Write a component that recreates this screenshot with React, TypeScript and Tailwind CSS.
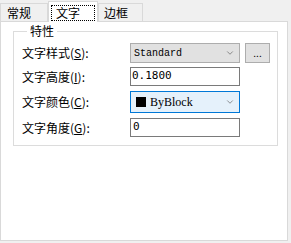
import { ChevronDown } from "lucide-react";

const cjk = "font-['SimSun','Noto_Sans_CJK_SC',sans-serif]";
const mono = "font-['Liberation_Mono','Noto_Sans_CJK_SC',monospace]";
const digits = "font-['DejaVu_Sans_Mono',monospace]";

function Label({ text, hot }: { text: string; hot: string }) {
  return (
    <span className={`w-[108px] shrink-0 text-[12px] leading-[14px] text-black ${cjk}`}>
      {text}(<span className="underline underline-offset-1">{hot}</span>):
    </span>
  );
}

export default function App() {
  return (
    <div className={`h-[243px] w-[291px] overflow-hidden bg-[#f0f0f0] ${cjk}`}>
      {/* tabs */}
      <div className="relative z-10 flex h-[21px] items-end">
        <div className="flex h-[18px] w-[48px] items-center border border-b-0 border-[#d9d9d9] bg-[#f0f0f0] pl-[6px] pt-[1px] text-[12px] text-black">
          常规
        </div>
        <div className="-mb-px flex h-[21px] w-[50px] items-center justify-center border border-b-0 border-[#d9d9d9] bg-white pt-[1px]">
          <span className="flex h-[16px] w-[44px] items-center border border-dotted border-black pl-[4px] text-[12px] text-black">
            文字
          </span>
        </div>
        <div className="flex h-[18px] w-[45px] items-center border border-b-0 border-[#d9d9d9] bg-[#f0f0f0] pl-[5px] pt-[1px] text-[12px] text-black">
          边框
        </div>
      </div>

      {/* panel */}
      <div className="h-[220px] w-[288px] border border-[#d9d9d9] bg-white pl-[12px] pt-[2px]">
        <fieldset className="h-[122px] w-[265px] border border-[#dcdcdc] pl-[8px]">
          <legend className="ml-[5px] px-[3px] text-[12px] leading-[14px] text-black">特性</legend>

          <div className="mt-[5px] flex items-center">
            <Label text="文字样式" hot="S" />
            <div className="flex h-[20px] w-[110px] items-center justify-between border border-[#adadad] bg-[#e1e1e1] pl-[3px] pr-[4px]">
              <span className={`text-[10px] text-black ${mono}`}>Standard</span>
              <ChevronDown size={10} strokeWidth={1.5} className="text-[#555]" />
            </div>
            <div className="ml-[5px] flex h-[20px] w-[25px] items-center justify-center border border-[#adadad] bg-[#e1e1e1] text-[10px] leading-none text-black">
              ...
            </div>
          </div>

          <div className="mt-[4px] flex items-center">
            <Label text="文字高度" hot="I" />
            <div className="flex h-[19px] w-[110px] items-center border border-[#7a7a7a] bg-white pl-[1px]">
              <span className={`text-[11px] text-black ${digits}`}>0.1800</span>
            </div>
          </div>

          <div className="mt-[5px] flex items-center">
            <Label text="文字颜色" hot="C" />
            <div className="flex h-[22px] w-[110px] items-center justify-between border border-[#0078d7] bg-[#e5f1fb] pl-[5px] pr-[4px]">
              <span className="flex items-center gap-[4px]">
                <span className="h-[10px] w-[10px] bg-black" />
                <span className="font-['Liberation_Serif',serif] text-[12px] text-black">ByBlock</span>
              </span>
              <ChevronDown size={10} strokeWidth={1.5} className="text-[#555]" />
            </div>
          </div>

          <div className="mt-[5px] flex items-center">
            <Label text="文字角度" hot="G" />
            <div className="flex h-[19px] w-[110px] items-center border border-[#7a7a7a] bg-white pl-[2px]">
              <span className={`text-[11px] text-black ${digits}`}>0</span>
            </div>
          </div>
        </fieldset>
      </div>
    </div>
  );
}
